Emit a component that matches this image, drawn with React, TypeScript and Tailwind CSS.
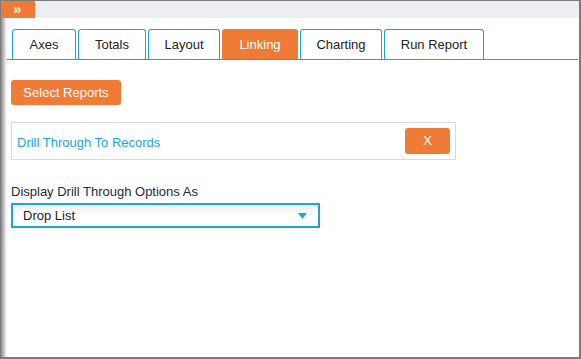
import { useState } from "react";

const tabs = [
  { label: "Axes", w: "w-[64px]" },
  { label: "Totals", w: "w-[68px]" },
  { label: "Layout", w: "w-[72px]" },
  { label: "Linking", w: "w-[76px]" },
  { label: "Charting", w: "w-[82px]" },
  { label: "Run Report", w: "w-[100px]" },
];

export default function App() {
  const [active, setActive] = useState("Linking");

  return (
    <div
      className="w-[581px] h-[359px] bg-white border-t border-l border-r-2 border-b-2 border-[#7b7b7b] flex flex-col overflow-hidden text-[13px] text-[#222]"
      style={{ fontFamily: '"Liberation Sans", Arial, sans-serif' }}
    >
      {/* top strip with collapse toggle */}
      <div className="h-[17px] bg-[#eceff2] flex shrink-0">
        <div className="w-[34px] bg-[#f07b36] flex items-center pl-[12px] pb-[2px] text-[#fde8dc] font-bold text-[15px] leading-none">
          »
        </div>
      </div>

      <div className="flex flex-1">
        <div className="w-[6px] bg-gradient-to-r from-[#8a8a8a] via-[#c9c9cc] to-white" />

        <div className="flex-1 pr-[1px]">
          {/* tabs */}
          <div className="mt-[11px] flex gap-[2px] pl-[5px] border-b border-[#1ea5d8]">
            {tabs.map((t) => {
              const on = t.label === active;
              return (
                <button
                  key={t.label}
                  onClick={() => setActive(t.label)}
                  className={
                    "h-[30px] rounded-t-[3px] border border-b-0 flex items-center justify-center text-[13px] " +
                    t.w +
                    (on
                      ? " bg-[#f07b36] border-[#f07b36] text-white"
                      : " bg-white border-[#1ea5d8] text-[#222]")
                  }
                >
                  {t.label}
                </button>
              );
            })}
          </div>

          <div className="pl-[4px] pt-[20px]">
            <button className="h-[25px] w-[110px] rounded-[3px] bg-[#f07b36] text-white text-[13px] flex items-center justify-center">
              Select Reports
            </button>

            <div className="mt-[17px] w-[445px] h-[38px] border border-[#d9d9d9] flex items-center justify-between pl-[5px] pr-[5px]">
              <span className="text-[#1ba3da] pt-[3px]">Drill Through To Records</span>
              <button className="w-[45px] h-[26px] rounded-[3px] bg-[#f07b36] text-white text-[13px] flex items-center justify-center">
                X
              </button>
            </div>

            <div className="mt-[24px] leading-[16px] text-[#2a2a3a]">
              Display Drill Through Options As
            </div>
            <div className="mt-[3px] w-[309px] h-[25px] border-2 border-[#1ea5d8] bg-[linear-gradient(#ededed,#ffffff_45%)] flex items-center justify-between pl-[10px] pr-[11px]">
              <span className="text-[#222]">Drop List</span>
              <svg width="9" height="6" viewBox="0 0 9 6">
                <path d="M0 0h9L4.5 6z" fill="#1ea5d8" />
              </svg>
            </div>
          </div>
        </div>
      </div>
    </div>
  );
}
